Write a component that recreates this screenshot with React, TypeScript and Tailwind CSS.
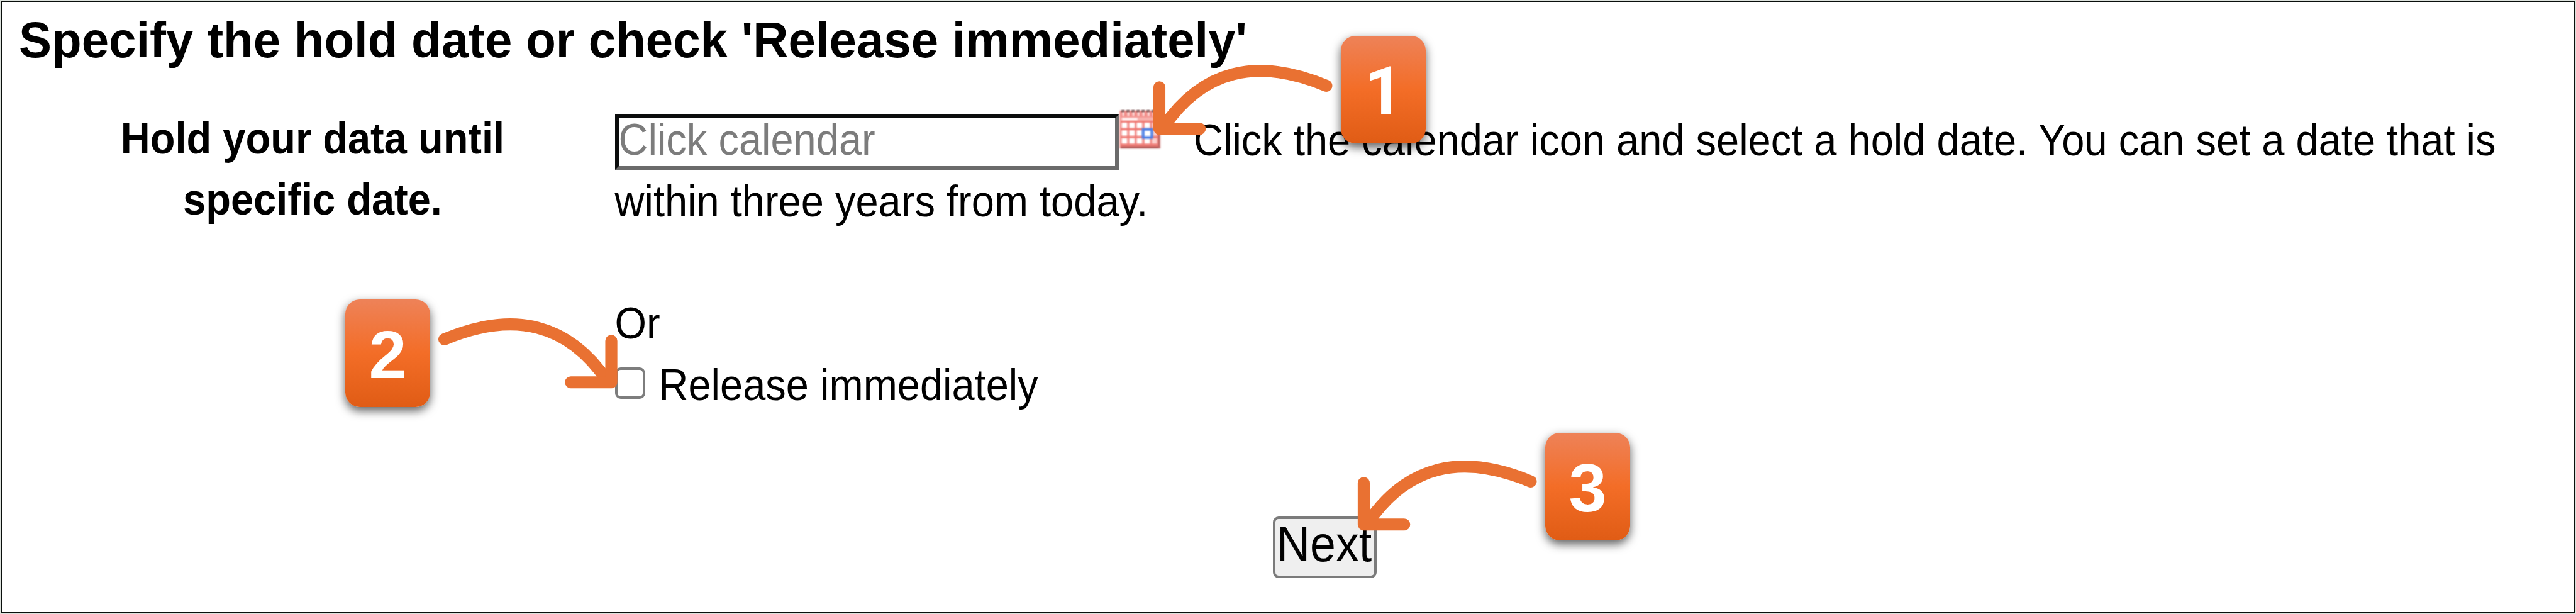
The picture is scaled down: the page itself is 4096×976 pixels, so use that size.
import type { ReactNode } from "react";

const ORANGE = "#e97132";

function Badge({ children, place }: { children: ReactNode; place: string }) {
  return (
    <div
      className={`absolute flex h-[171px] w-[135px] items-center justify-center rounded-[23px] bg-[linear-gradient(180deg,#ee8258_0%,#f36d27_50%,#e05c15_100%)] shadow-[0_6px_15px_rgba(0,0,0,0.63)] ${place}`}
    >
      <span className="block translate-y-[2px] text-[108px] leading-none font-bold text-white">{children}</span>
    </div>
  );
}

function Arrow({ place }: { place: string }) {
  return (
    <svg
      viewBox="0 0 300 118"
      className={`absolute h-[111.5px] w-[283.5px] overflow-visible ${place}`}
      fill="none"
      stroke={ORANGE}
      strokeWidth="20.3"
      strokeLinecap="round"
      strokeLinejoin="round"
    >
      <path d="M290.9 35.3 Q114.200 -38.4 17 105" />
      <path d="M10 38 L10 107.7 L78 107.7" />
    </svg>
  );
}

function CalendarIcon() {
  return (
    <svg viewBox="0 0 68 65" className="h-[61.5px] w-[65px] blur-[0.8px]">
      <rect x="0" y="1" width="68" height="64" fill="#f28c88" />
      {[3, 11.5, 20, 28.5, 37, 45.5, 54, 62].map((x) => (
        <g key={x}>
          <rect x={x} y="0" width="5" height="3.500" fill="#5b3535" />
          <rect x={x + 1.5} y="3" width="3" height="7" fill="#fde3e1" />
        </g>
      ))}
      <rect x="2" y="12" width="62" height="6.500" fill="#f7b0ac" />
      <rect x="4" y="13" width="26" height="4.500" fill="#fff1f0" />
      <g fill="none" stroke="#ee7670" strokeWidth="3">
        <path d="M2 19.500H64M2 32H64M2 45H64M2 58.500H64" />
      </g>
      {[21.2, 34, 47.4].map((y) =>
        [3.500, 16.2, 28.8, 41.8].map((x) => (
          <rect key={`${x}-${y}`} x={x} y={y} width="9" height="9" rx="1" fill="#fff" />
        )),
      )}
      {[21.2, 34, 47.4].map((y) => (
        <rect key={y} x="54.500" y={y} width="8" height="9" rx="1" fill="#fbd0cd" />
      ))}
      <rect x="39.500" y="32.500" width="14.500" height="13.500" fill="#fff" stroke="#4b7fe6" strokeWidth="4.500" />
      <rect x="2" y="61" width="66" height="4" fill="#b05250" />
      <rect x="64.500" y="14" width="3.500" height="51" fill="#c06462" />
    </svg>
  );
}

export default function App() {
  return (
    <main className="relative flex h-[976px] w-[4096px] flex-col overflow-hidden border border-[#dde2dd] bg-white pt-px pl-px font-['Liberation_Sans',Arial,sans-serif] text-[65px] leading-[97.25px] text-black shadow-[inset_0_0_0_2px_#0a0f0c]">
      <h1 className="mt-[13.5px] ml-[28px] h-[97px] origin-[0_75px] scale-y-[1.03] text-[78px] font-bold whitespace-nowrap">
        Specify the hold date or check 'Release immediately'
      </h1>

      <div className="mt-[61.2px] flex">
        <div className="-mt-[1px] ml-[138.5px] w-[713px] text-center font-bold">
          <div className="origin-[0_71px] scale-y-[1.08]">Hold your data until</div>
          <div className="origin-[0_71px] scale-y-[1.08]">specific date.</div>
        </div>

        <div className="ml-[124px] flex w-[3060px] flex-col">
          <div className="flex h-[97.25px] items-start">
            <div className="mt-[8px] flex h-[88px] w-[801px] items-center border-6 border-t-[#0b0d0d] border-r-[#6b6b6b] border-b-[#6b6b6b] border-l-[#0b0d0d] bg-white">
              <span className="block origin-[0_71px] translate-y-[-2px] scale-y-[1.08] whitespace-nowrap text-[#7c7c7c]">
                Click calendar
              </span>
            </div>
            <div className="mt-[1px] ml-[1.5px]">
              <CalendarIcon />
            </div>
            <span className="ml-[53px] block origin-[0_71px] translate-y-[2px] scale-y-[1.08] whitespace-nowrap">
              Click the calendar icon and select a hold date. You can set a date that is
            </span>
          </div>
          <div className="origin-[0_71px] translate-y-[2px] scale-y-[1.08]">within three years from today.</div>
          <div className="mt-[97.25px] origin-[0_71px] translate-y-[2px] scale-y-[1.08]">Or</div>
          <div className="flex h-[97.25px] items-start">
            <span className="mt-[21px] block h-[50px] w-[48px] rounded-[9px] border-4 border-[#7d7d7d] bg-white" />
            <span className="ml-[22px] block origin-[0_71px] translate-y-[2px] scale-y-[1.08] whitespace-nowrap">
              Release immediately
            </span>
          </div>
        </div>
      </div>

      <button className="mt-[161px] ml-[2022px] flex h-[98px] w-[165px] items-center justify-center rounded-[9px] border-4 border-[#7b7b7b] bg-[#efefef] text-[73.5px]">
        <span className="block origin-[0_75px] translate-x-[-1px] translate-y-[-2.5px] scale-y-[1.09]">Next</span>
      </button>

      <Arrow place="left-[1833px] top-[102px]" />
      <Badge place="left-[2131px] top-[56px]">
        <span className="block translate-x-[0.5px] font-[Roboto] text-[106px]">1</span>
      </Badge>
      <Arrow place="left-[697px] top-[504.6px] -scale-x-100" />
      <Badge place="left-[548px] top-[475px]">2</Badge>
      <Arrow place="left-[2158px] top-[731.4px]" />
      <Badge place="left-[2456px] top-[687px]">3</Badge>
    </main>
  );
}
